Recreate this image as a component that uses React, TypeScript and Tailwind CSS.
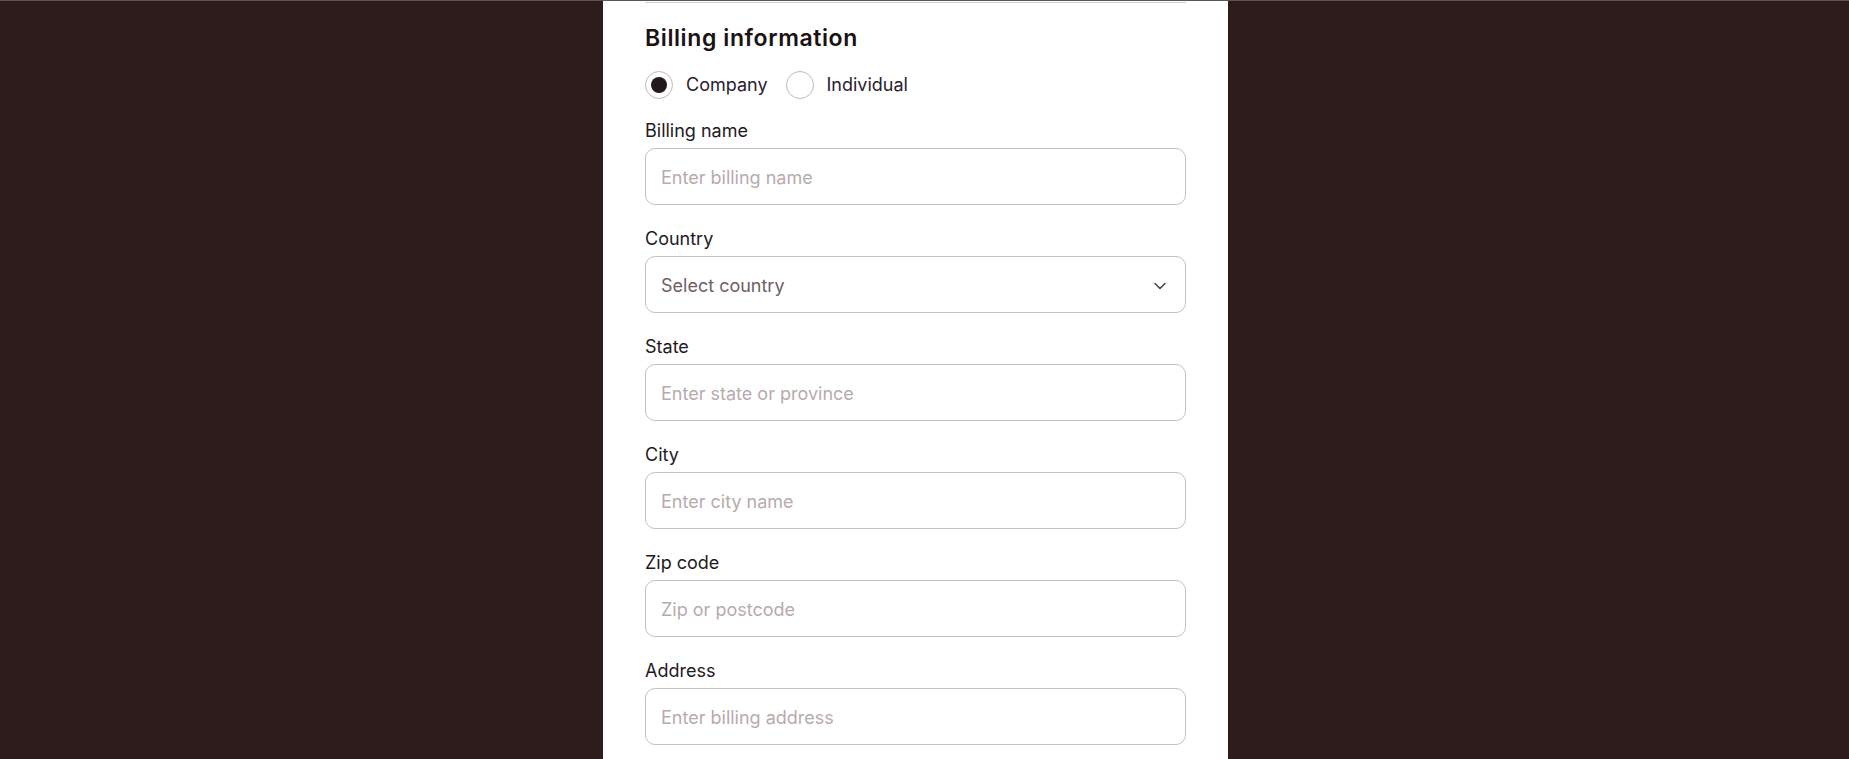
import { ChevronDown } from "lucide-react";

const font = { fontFamily: "Inter, 'Noto Sans', sans-serif" };

function Field({ label, placeholder }: { label: string; placeholder: string }) {
  return (
    <div className="flex flex-col">
      <label className="mb-[5px] text-[18px] leading-6 text-[#241a1b]">{label}</label>
      <input
        placeholder={placeholder}
        className="h-[57px] w-full rounded-[10px] border-[1.5px] border-[#cbbdbd] bg-white px-[15px] pt-[2px] text-[18px] text-[#241a1b] outline-none placeholder:text-[#b8abab]"
        style={font}
      />
    </div>
  );
}

function Radio({ label, checked = false }: { label: string; checked?: boolean }) {
  return (
    <label className="flex items-center gap-[13px]">
      <span className="flex h-7 w-7 items-center justify-center rounded-full border-[1.5px] border-[#c9b7b7] bg-white">
        {checked && <span className="h-4 w-4 rounded-full bg-[#231a1b]" />}
      </span>
      <span className="text-[18px] leading-6 text-[#2a2030]">{label}</span>
    </label>
  );
}

export default function App() {
  return (
    <div className="flex h-[759px] w-full flex-col overflow-hidden bg-[#2e1b1c]" style={font}>
      <div className="h-px w-full shrink-0 bg-[#5b5656]" />
      <div className="ml-[603px] flex w-[625px] flex-1 flex-col bg-white px-[42px]">
        <div className="h-[2px] w-full border-b-[1.5px] border-[#d8cbcb]" />
        <h2 className="mt-[21px] text-[23px] font-semibold leading-7 tracking-[0.6px] text-[#1a1213]">
          Billing information
        </h2>
        <div className="mt-[19px] flex items-center gap-[18px]">
          <Radio label="Company" checked />
          <Radio label="Individual" />
        </div>
        <div className="mt-[20px] flex flex-col gap-[22px]">
          <Field label="Billing name" placeholder="Enter billing name" />
          <div className="flex flex-col">
            <label className="mb-[5px] text-[18px] leading-6 text-[#241a1b]">Country</label>
            <div className="flex h-[57px] w-full items-center justify-between rounded-[10px] border-[1.5px] border-[#cbbdbd] bg-white pl-[15px] pr-[15px] pt-[2px]">
              <span className="text-[18px] text-[#6f5f60]">Select country</span>
              <ChevronDown className="h-5 w-5 text-[#4a3d3e]" strokeWidth={1.8} />
            </div>
          </div>
          <Field label="State" placeholder="Enter state or province" />
          <Field label="City" placeholder="Enter city name" />
          <Field label="Zip code" placeholder="Zip or postcode" />
          <Field label="Address" placeholder="Enter billing address" />
        </div>
      </div>
    </div>
  );
}
